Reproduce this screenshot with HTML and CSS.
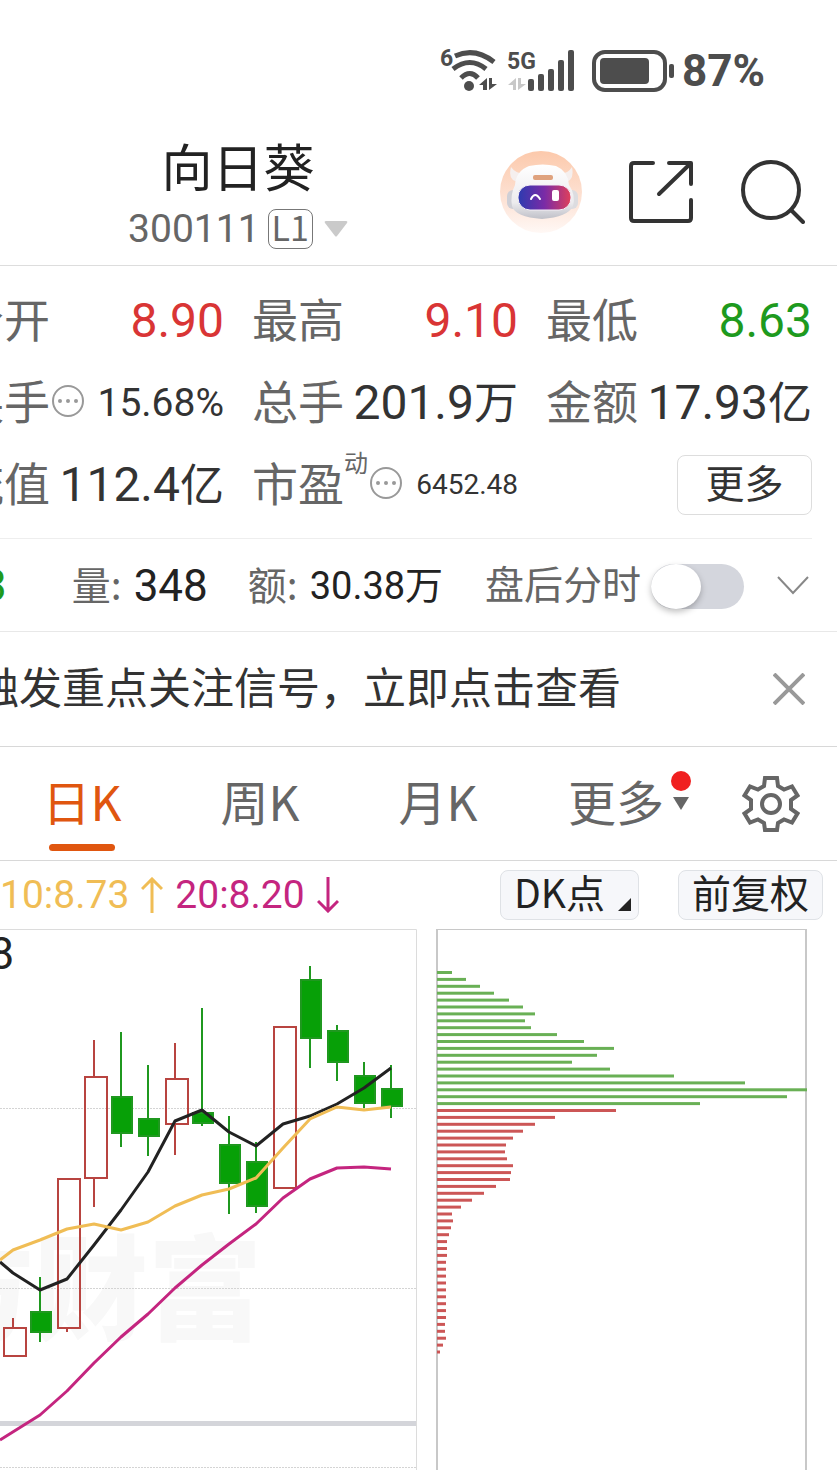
FILE: index.html
```html
<!DOCTYPE html>
<html lang="zh-CN">
<head>
    <meta charset="UTF-8">
    <meta name="viewport" content="width=device-width, initial-scale=1.0">
    <title>向日葵 300111</title>
    <link rel="stylesheet" href="styles.css">
</head>
<body>
    <div class="status-bar">
        <svg class="wifi" width="58" height="44" viewBox="0 0 58 44" aria-hidden="true">
            <text class="network" x="1" y="17">6</text>
            <g fill="none" stroke="#4d4d4d" stroke-width="5">
                <path d="M16 7 Q36 -2 55 13"/>
                <path d="M14 20 Q31 7 47 20"/>
                <path d="M22 29 Q31 20 39 29"/>
            </g>
            <circle cx="30" cy="37" r="5" fill="#4d4d4d"/>
            <path d="M48 29v12h-4v-5h-4zM50 41V29h3v6h5z" fill="#4d4d4d"/>
        </svg>
        <svg class="signal" width="69" height="44" viewBox="0 0 69 44" aria-hidden="true">
            <text class="network" x="0" y="20">5G</text>
            <path d="M9 29v12H6v-5H1zM11 41V29h3v6h5z" fill="#c8c8c8"/>
            <g fill="#4d4d4d">
                <rect x="21" y="30" width="6" height="12" rx="2"/>
                <rect x="31" y="25" width="6" height="17" rx="2"/>
                <rect x="41" y="20" width="6" height="22" rx="2"/>
                <rect x="51" y="11" width="6" height="31" rx="2"/>
                <rect x="61" y="1" width="6" height="41" rx="2"/>
            </g>
        </svg>
        <svg class="battery" width="84" height="42" viewBox="0 0 84 42" aria-hidden="true">
            <rect x="2" y="2" width="71" height="38" rx="11" fill="none" stroke="#4d4d4d" stroke-width="4"/>
            <rect x="8" y="8" width="49" height="26" rx="4" fill="#4d4d4d"/>
            <rect x="77" y="14" width="5" height="14" rx="2" fill="#4d4d4d"/>
        </svg>
        <span class="battery-text">87%</span>
    </div>

    <header class="header">
        <div class="stock">
            <h1 class="stock-name">向日葵</h1>
            <div class="stock-code">
                <span>300111</span>
                <span class="level">L1</span>
                <svg width="24" height="16" viewBox="0 0 24 16" aria-hidden="true"><path d="M2 0h20q2 0 1 2L13 15q-1 1-2 0L1 2Q0 0 2 0z" fill="#cacaca"/></svg>
            </div>
        </div>
        <div class="header-icons">
            <button class="icon-btn" aria-label="AI助手">
                <svg width="82" height="82" viewBox="0 0 82 82">
                    <defs>
                        <linearGradient id="sky" x1="0" y1="0" x2="0" y2="1">
                            <stop offset="0" stop-color="#fcc9ab"/>
                            <stop offset="0.6" stop-color="#fde3d6"/>
                            <stop offset="1" stop-color="#fff8f5"/>
                        </linearGradient>
                        <linearGradient id="visor" x1="0" y1="0" x2="1" y2="0">
                            <stop offset="0" stop-color="#2c3bb0"/>
                            <stop offset="0.5" stop-color="#7a2ba6"/>
                            <stop offset="1" stop-color="#e0405a"/>
                        </linearGradient>
                        <linearGradient id="shell" x1="0" y1="0" x2="0" y2="1">
                            <stop offset="0" stop-color="#ffffff"/>
                            <stop offset="0.7" stop-color="#ecebee"/>
                            <stop offset="1" stop-color="#bfc0c8"/>
                        </linearGradient>
                    </defs>
                    <circle cx="41" cy="41" r="41" fill="url(#sky)"/>
                    <path d="M21 31Q7 31 11 16q5 7 14 7zM63 31q12 0 9-15-4 7-13 7z" fill="#f5efee"/>
                    <rect x="7" y="39" width="14" height="19" rx="6" fill="#cfcfd6"/>
                    <rect x="64" y="39" width="14" height="19" rx="6" fill="#dcdce0"/>
                    <path d="M15 34q1-14 14-19 14-3 27 0 12 5 13 19 7 10 4 21-5 11-31 13-27-2-30-13-2-11 3-21z" fill="url(#shell)"/>
                    <rect x="33" y="24" width="20" height="5" rx="2" fill="#dfa27e"/>
                    <rect x="18" y="34" width="53" height="25" rx="12" fill="url(#visor)" stroke="#f4eef6"/>
                    <path d="M31 48q4-8 9 0" fill="none" stroke="#fff" stroke-width="2" stroke-linecap="round"/>
                    <rect x="52" y="39" width="7" height="11" rx="2" fill="#fff"/>
                </svg>
            </button>
            <button class="icon-btn" aria-label="分享">
                <svg width="64" height="64" viewBox="0 0 64 64" fill="none" stroke="#333" stroke-width="4" stroke-linecap="round" stroke-linejoin="round">
                    <path d="M24 3H5q-3 0-3 3v52q0 3 3 3h54q3 0 3-3V40"/>
                    <path d="M40 3h22v21M61 4L30 34"/>
                </svg>
            </button>
            <button class="icon-btn" aria-label="搜索">
                <svg width="65" height="65" viewBox="0 0 65 65" fill="none" stroke="#333" stroke-width="4" stroke-linecap="round">
                    <circle cx="31" cy="31" r="28"/>
                    <path d="M51 51l12 12"/>
                </svg>
            </button>
        </div>
    </header>

    <section class="quotes">
        <div class="quote"><span class="label">今开</span><span class="value up">8.90</span></div>
        <div class="quote"><span class="label">最高</span><span class="value up">9.10</span></div>
        <div class="quote"><span class="label">最低</span><span class="value down">8.63</span></div>
        <div class="quote">
            <span class="label">换手</span>
            <button class="info" aria-label="换手说明"><svg width="34" height="34" viewBox="0 0 34 34"><circle cx="17" cy="17" r="15" fill="none" stroke="#999" stroke-width="2"/><g fill="#999"><circle cx="9" cy="17" r="2"/><circle cx="17" cy="17" r="2"/><circle cx="25" cy="17" r="2"/></g></svg></button>
            <span class="value medium">15.68%</span>
        </div>
        <div class="quote"><span class="label">总手</span><span class="value">201.9<span class="unit">万</span></span></div>
        <div class="quote"><span class="label">金额</span><span class="value">17.93<span class="unit">亿</span></span></div>
        <div class="quote"><span class="label">流值</span><span class="value">112.4<span class="unit">亿</span></span></div>
        <div class="quote">
            <span class="label">市盈</span><span class="mark">动</span>
            <button class="info" aria-label="市盈说明"><svg width="34" height="34" viewBox="0 0 34 34"><circle cx="17" cy="17" r="15" fill="none" stroke="#999" stroke-width="2"/><g fill="#999"><circle cx="9" cy="17" r="2"/><circle cx="17" cy="17" r="2"/><circle cx="25" cy="17" r="2"/></g></svg></button>
            <span class="value small">6452.48</span>
        </div>
        <div class="quote"><button class="more-btn">更多</button></div>
    </section>

    <section class="after-hours">
        <span class="ah-price down">8.63</span>
        <span class="ah-label">量:</span>
        <span class="ah-volume">348</span>
        <span class="ah-label">额:</span>
        <span class="ah-amount">30.38万</span>
        <label class="ah-switch">盘后分时<input type="checkbox" class="switch"></label>
        <button class="icon-btn" aria-label="展开">
            <svg width="32" height="20" viewBox="0 0 32 20" fill="none" stroke="#888" stroke-width="2"><path d="M1 1l15 16L31 1"/></svg>
        </button>
    </section>

    <section class="notice">
        <a class="notice-text" href="#">触发重点关注信号，立即点击查看</a>
        <button class="icon-btn" aria-label="关闭">
            <svg width="32" height="32" viewBox="0 0 32 32" stroke="#999" stroke-width="4"><path d="M1 1l30 30M31 1L1 31"/></svg>
        </button>
    </section>

    <nav class="tabs">
        <button class="tab active">日K</button>
        <button class="tab">周K</button>
        <button class="tab">月K</button>
        <button class="tab"><span class="tab-more">更多</span></button>
        <button class="icon-btn settings" aria-label="设置">
            <svg width="58" height="58" viewBox="0 0 58 58" fill="none" stroke="#666" stroke-width="4">
                <path d="M23 3H35L36 11L42 14.5L50 11.5L55.5 20.5L49 25V34L55.5 38.5L50 47.5L42 44.5L36 48L35 55H23L22 48L16 44.5L8 47.5L2.5 38.5L9 34V25L2.5 20.5L8 11.5L16 14.5L22 11Z"/>
                <circle cx="29" cy="29" r="9"/>
            </svg>
        </button>
    </nav>

    <div class="ma-bar">
        <span class="ma ma10">10:8.73<svg width="22" height="36" viewBox="0 0 22 36" fill="none" stroke="currentColor" stroke-width="3"><path d="M11 36V2M1 12L11 2l10 10"/></svg></span>
        <span class="ma ma20">20:8.20<svg width="22" height="36" viewBox="0 0 22 36" fill="none" stroke="currentColor" stroke-width="3"><path d="M11 0v34M1 24l10 10 10-10"/></svg></span>
        <button class="chip dk">DK点<svg width="13" height="13" viewBox="0 0 13 13" aria-hidden="true"><path d="M13 0v13H0z" fill="#222"/></svg></button>
        <button class="chip">前复权</button>
    </div>

    <main class="charts">
        <svg class="kline" id="kline" viewBox="0 0 417 541">
            <text class="watermark" x="262" y="402">东方财富</text>
            <path class="grid-line" d="M0 179.5H416M0 359.5H416M0 538.5H416"/>
            <rect x="0" y="492" width="416" height="5" fill="#d4d5da"/>
            <path d="M0 .5H416.5V541" fill="none" stroke="#dcdcdc"/>
            <text class="axis-label" x="14" y="40">8</text>
        </svg>
        <svg class="chips" id="chips" viewBox="0 0 371 541">
            <path d="M1 541V0M370 541V0" stroke="#c8c8c8" stroke-width="2"/>
            <path d="M0 .5H371" stroke="#c8c8c8"/>
        </svg>
    </main>

    <script>
        var NS = 'http://www.w3.org/2000/svg';

        function add(parent, name, attrs) {
            var el = document.createElementNS(NS, name);
            for (var key in attrs) el.setAttribute(key, attrs[key]);
            parent.appendChild(el);
        }

        // x, high, body top, body bottom, low, rising
        var candles = [
            [13, 389, 398, 428, 428, 1],
            [40, 348, 382, 404, 413, 0],
            [67, 249, 249, 400, 403, 1],
            [94, 111, 147, 250, 278, 1],
            [121, 103, 167, 205, 218, 0],
            [148, 136, 189, 208, 227, 0],
            [175, 114, 149, 196, 226, 1],
            [202, 79, 183, 195, 197, 0],
            [229, 187, 215, 255, 285, 0],
            [256, 213, 232, 278, 284, 0],
            [283, 98, 97, 260, 260, 1],
            [310, 37, 50, 110, 139, 0],
            [337, 96, 101, 134, 152, 0],
            [364, 133, 146, 175, 179, 0],
            [391, 136, 159, 178, 189, 0]
        ];
        var averages = {
            ma20: '0,511 40,486 67,462 94,434 121,408 148,385 175,359 202,336 229,315 256,295 283,269 310,250 337,239 364,238 391,240',
            ma5: '0,333 13,344 40,361 67,350 94,316 121,281 148,243 175,192 202,181 229,203 256,217 283,195 310,187 337,175 364,159 391,139',
            ma10: '0,331 13,321 40,311 67,300 94,295 121,301 148,293 175,277 202,266 229,260 256,249 283,219 310,190 337,178 364,181 391,178'
        };
        var holdLoss = [15, 29, 43, 57, 72, 86, 98, 88, 94, 120, 147, 177, 160, 135, 173, 237, 308, 370, 350, 263];
        var holdGain = [179, 118, 98, 86, 76, 69, 68, 70, 76, 74, 73, 59, 47, 35, 24, 15, 16, 14, 12, 10, 10, 10,
            9, 9, 9, 9, 9, 9, 9, 9, 9, 8, 8, 9, 6, 3];

        var kline = document.getElementById('kline');
        candles.forEach(function (c) {
            var cls = c[5] ? 'candle-up' : 'candle-down';
            add(kline, 'path', { 'class': cls, d: 'M' + c[0] + ' ' + c[1] + 'V' + c[2] + 'M' + c[0] + ' ' + c[3] + 'V' + c[4] });
            add(kline, 'rect', { 'class': cls, x: c[0] - 9, y: c[2] + 1, width: c[5] ? 22 : 20, height: c[3] - c[2] - 2 });
        });
        for (var name in averages) {
            add(kline, 'polyline', { 'class': 'line-' + name, points: averages[name] });
        }

        var chips = document.getElementById('chips');
        holdLoss.concat(holdGain).forEach(function (w, i) {
            add(chips, 'rect', { 'class': i < holdLoss.length ? 'hold-loss' : 'hold-gain', x: 1, y: 42 + i * 6.9, width: w, height: 3 });
        });
    </script>
</body>
</html>
```
FILE: styles.css
```css
* {
    box-sizing: border-box;
}

body {
    font-family: Roboto, "Noto Sans CJK SC", sans-serif;
    margin: 0;
    background-color: #fff;
    color: #333;
    line-height: 1;
    overflow-x: hidden;
}

button {
    font-family: "Noto Sans CJK SC", sans-serif;
    padding: 0;
    border: none;
    background: none;
    color: inherit;
    line-height: 1;
    cursor: pointer;
}

svg {
    display: block;
}

.icon-btn {
    flex: none;
}

.up {
    color: #d93535;
}

.down {
    color: #1e9a1e;
}

.status-bar {
    display: flex;
    align-items: center;
    justify-content: flex-end;
    height: 110px;
    padding: 32px 72px 0 0;
    color: #4d4d4d;
}

.network {
    font-size: 23px;
    font-weight: bold;
    fill: #4d4d4d;
}

.signal {
    margin-left: 10px;
}

.battery {
    margin: 0 6px 0 16px;
}

.battery-text {
    font-size: 44px;
    font-weight: bold;
}

.header {
    display: flex;
    align-items: center;
    height: 156px;
    padding: 8px 32px 0 0;
    border-bottom: 1px solid #ddd;
}

.stock {
    flex: 1;
    padding: 10px 24px 0 0;
}

.stock-name {
    margin: 0 0 14px;
    font-size: 51px;
    font-weight: normal;
    color: #222;
    text-align: center;
}

.stock-code {
    display: flex;
    align-items: center;
    justify-content: center;
    font-size: 39px;
    color: #666;
}

.level {
    height: 40px;
    margin: 0 11px 0 8px;
    padding: 0 3px;
    border: 1px solid #777;
    border-radius: 8px;
    font-family: "Noto Sans CJK SC", sans-serif;
    font-size: 34px;
    line-height: 34px;
}

.header-icons {
    display: flex;
    align-items: center;
    gap: 47px;
}

.quotes {
    display: grid;
    grid-template-columns: repeat(3, 1fr);
    grid-auto-rows: 82px;
    column-gap: 28px;
    margin: 0 25px 0 -42px;
    padding: 14px 0 12px;
    border-bottom: 1px solid #eee;
}

.quote {
    display: flex;
    align-items: center;
    white-space: nowrap;
}

.label {
    font-size: 46px;
    color: #666;
}

.value {
    margin-left: auto;
    font-size: 48px;
}

.value.medium {
    font-size: 39px;
}

.value.small {
    font-size: 28px;
}

.unit {
    font-size: 44px;
}

.mark {
    align-self: flex-start;
    padding-top: 8px;
    font-size: 24px;
    color: #666;
}

.info {
    padding: 0 0 4px 1px;
}

.more-btn {
    width: 135px;
    height: 60px;
    margin-left: auto;
    padding-bottom: 8px;
    border: 1px solid #ddd;
    border-radius: 8px;
    font-size: 39px;
}

.after-hours {
    display: flex;
    align-items: center;
    height: 93px;
    padding: 2px 28px 0 0;
    border-bottom: 1px solid #e8e8e8;
    color: #222;
    white-space: nowrap;
}

.ah-price {
    margin: 0 65px 0 -79px;
    font-size: 44px;
}

.ah-label {
    margin-right: 12px;
    padding-bottom: 6px;
    font-family: "Noto Sans CJK SC", sans-serif;
    font-size: 39px;
    color: #666;
}

.ah-volume {
    margin-right: 40px;
    font-size: 44px;
}

.ah-amount {
    font-size: 38px;
}

.ah-switch {
    display: flex;
    align-items: center;
    gap: 10px;
    margin: 0 33px 0 auto;
    font-size: 39px;
    color: #666;
}

.switch {
    appearance: none;
    width: 93px;
    height: 45px;
    margin: 0;
    border-radius: 23px;
    background-color: #d4d6dd;
}

.switch::before {
    content: "";
    display: block;
    width: 50px;
    height: 45px;
    border-radius: 50%;
    background-color: #fff;
    box-shadow: 0 3px 6px rgba(0, 0, 0, 0.25);
}

.switch:checked::before {
    margin-left: auto;
}

.notice {
    display: flex;
    align-items: center;
    justify-content: space-between;
    height: 115px;
    padding-right: 32px;
    border-bottom: 1px solid #d8d8d8;
}

.notice-text {
    margin-left: -24px;
    font-size: 43px;
    color: #333;
    text-decoration: none;
    white-space: nowrap;
}

.tabs {
    display: grid;
    grid-template-columns: repeat(4, 1fr) 132px;
    height: 114px;
    margin-left: -7px;
    border-bottom: 1px solid #d8d8d8;
}

.tab {
    position: relative;
    padding-bottom: 8px;
    font-size: 48px;
    color: #666;
}

.tab.active {
    color: #e0560f;
}

.tab.active::after {
    content: "";
    position: absolute;
    left: 50%;
    bottom: 9px;
    width: 66px;
    height: 7px;
    margin-left: -33px;
    border-radius: 4px;
    background-color: #e0560f;
}

.tab-more {
    position: relative;
}

.tab-more::before {
    content: "";
    position: absolute;
    top: 6px;
    right: -27px;
    width: 20px;
    height: 20px;
    border-radius: 50%;
    background-color: #f02020;
}

.tab-more::after {
    content: "";
    position: absolute;
    top: 32px;
    right: -25px;
    border: 8px solid transparent;
    border-top: 13px solid #666;
    border-bottom: none;
}

.settings {
    justify-self: center;
}

.ma-bar {
    display: flex;
    align-items: center;
    height: 68px;
    padding-right: 14px;
}

.ma {
    display: flex;
    align-items: center;
    gap: 12px;
    margin-right: 12px;
    font-size: 39px;
}

.ma10 {
    color: #f0bd55;
}

.ma20 {
    color: #c4257f;
}

.chip {
    height: 50px;
    padding: 0 13px 8px;
    border: 1px solid #dfe2e6;
    border-radius: 8px;
    background-color: #f6f7fa;
    font-size: 39px;
    color: #222;
}

.dk {
    display: flex;
    align-items: center;
    gap: 13px;
    margin: 0 39px 0 auto;
    padding-right: 7px;
}

.dk svg {
    align-self: flex-end;
}

.charts {
    display: grid;
    grid-template-columns: 417fr 371fr;
    column-gap: 19px;
    padding-right: 30px;
}

.kline,
.chips {
    width: 100%;
}

.watermark {
    font-size: 114px;
    font-weight: 900;
    fill: #f8f8f8;
    text-anchor: end;
}

.axis-label {
    font-size: 44px;
    fill: #222;
    text-anchor: end;
}

.grid-line {
    fill: none;
    stroke: #d4d4d4;
    stroke-dasharray: 2 1;
}

.candle-up {
    fill: none;
    stroke: #b84440;
    stroke-width: 2;
}

.candle-down {
    fill: #07a007;
    stroke: #1f981f;
    stroke-width: 2;
}

.line-ma5,
.line-ma10,
.line-ma20 {
    fill: none;
    stroke: #222;
    stroke-width: 3;
    stroke-linejoin: round;
}

.line-ma10 {
    stroke: #f0bd55;
}

.line-ma20 {
    stroke: #c4257f;
}

.hold-loss {
    fill: #69b055;
}

.hold-gain {
    fill: #cc5656;
}
```
